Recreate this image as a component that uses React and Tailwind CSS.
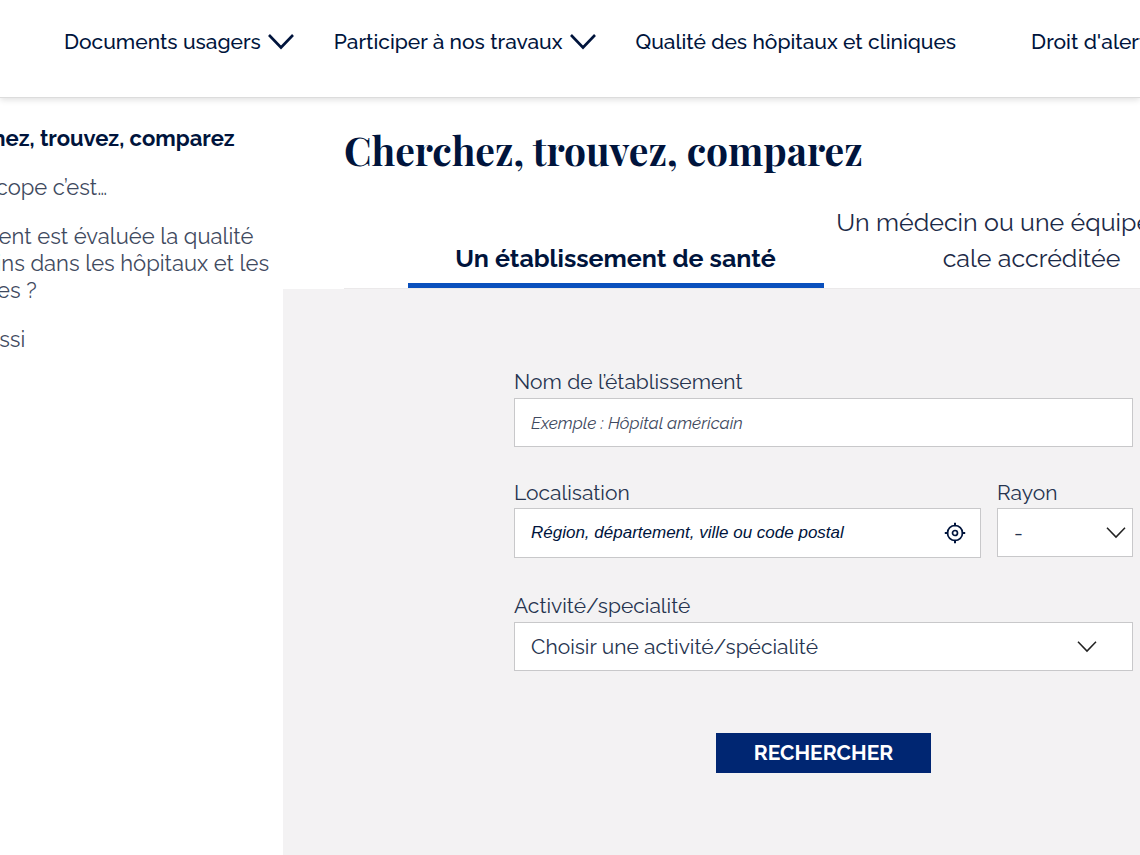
import React, { useState } from 'react';

const NAV_ITEMS = [
  { label: 'Documents usagers', hasMenu: true },
  { label: 'Participer à nos travaux', hasMenu: true },
  { label: 'Qualité des hôpitaux et cliniques', hasMenu: false },
  { label: "Droit d'alerte", hasMenu: false },
];

const SIDE_LINKS = [
  'QualiScope c’est…',
  'Comment est évaluée la qualité des soins dans les hôpitaux et les cliniques ?',
  'Voir aussi',
];

const Chevron = ({ className, strokeWidth = 2 }) => (
  <svg viewBox="0 0 26 16" fill="none" stroke="currentColor" strokeWidth={strokeWidth} className={className} aria-hidden="true">
    <path d="M1 1 L13 13.5 L25 1" />
  </svg>
);

const TargetIcon = () => (
  <svg viewBox="0 0 22 22" fill="none" stroke="currentColor" strokeWidth="2" className="w-[22px] h-[22px]" aria-hidden="true">
    <circle cx="11" cy="11" r="7.5" strokeWidth="1.7" />
    <circle cx="11" cy="11" r="2.5" strokeWidth="1.7" />
    <path d="M11 0.8v3.4M11 17.8v3.4M0.8 11h3.4M17.8 11h3.4" />
  </svg>
);

const Header = () => (
  <header className="relative border-b border-[#dcdcdc] shadow-[0_2px_6px_rgba(0,0,0,0.12)]">
    <nav className="flex gap-10 pl-16 h-[97px] pb-3.5 items-center">
      {NAV_ITEMS.map((item) => (
        <a
          key={item.label}
          href="#"
          className="flex shrink-0 items-center gap-[7px] whitespace-nowrap text-[21px] leading-7 font-medium"
        >
          {item.label}
          {/* Entries without a submenu keep the chevron's space */}
          {item.hasMenu ? <Chevron className="w-[26px] h-4" strokeWidth={2.6} /> : <span className="w-7" />}
        </a>
      ))}
    </nav>
  </header>
);

const Sidebar = () => (
  <aside className="w-[353px] -ml-[70px] pr-2 pt-[27px] shrink-0 text-[22px] leading-[27px]">
    <ul className="flex flex-col gap-[22px]">
      <li>
        <a href="#" className="block font-bold">Cherchez, trouvez, comparez</a>
      </li>
      {SIDE_LINKS.map((label) => (
        <li key={label}>
          <a href="#" className="block text-[#3f4a60]">{label}</a>
        </li>
      ))}
    </ul>
  </aside>
);

const Tabs = ({ active, onChange }) => (
  <div className="flex justify-center mx-[61px] border-b border-[#ebe9ea] text-[25px] leading-9" role="tablist">
    <button
      type="button"
      role="tab"
      aria-selected={active === 0}
      onClick={() => onChange(0)}
      className="w-[416px] pb-[7px] flex items-end justify-center border-b-[5px] border-[#0a50bd] font-bold"
    >
      Un établissement de santé
    </button>
    <button
      type="button"
      role="tab"
      aria-selected={active === 1}
      onClick={() => onChange(1)}
      className="w-[416px] pb-[7px] border-b-[5px] border-transparent text-[#1c2a47] whitespace-nowrap"
    >
      Un médecin ou une équipe médi-
      <br />
      cale accréditée
    </button>
  </div>
);

const SearchForm = () => (
  <form
    className="w-[619px] mx-auto pt-[79px] text-[21px] leading-7 text-[#26344f]"
    onSubmit={(e) => e.preventDefault()}
  >
    <label htmlFor="name" className="block">Nom de l’établissement</label>
    <input
      id="name"
      type="text"
      placeholder="Exemple : Hôpital américain"
      className="block w-full h-[49px] mt-[2px] px-4 border border-[#c8c8ca] bg-white text-[17px] italic placeholder:text-[#3f4a60]"
    />

    <div className="flex gap-4 mt-8">
      <div className="flex-1">
        <label htmlFor="place" className="block">Localisation</label>
        <div className="flex items-center h-[50px] mt-[1px] pl-4 pr-[14px] border border-[#c8c8ca] bg-white">
          <input
            id="place"
            type="text"
            placeholder="Région, département, ville ou code postal"
            className="flex-1 font-['Liberation_Sans',Arial,sans-serif] text-[17px] italic placeholder:text-[#00143c]"
          />
          <button type="button" aria-label="Me localiser" className="text-[#00143c]">
            <TargetIcon />
          </button>
        </div>
      </div>
      <div className="w-[136px]">
        <label htmlFor="radius" className="block">Rayon</label>
        <div className="relative mt-[1px]">
          <select id="radius" className="appearance-none w-full h-[49px] px-4 border border-[#c8c8ca] bg-white">
            <option>-</option>
          </select>
          <Chevron className="absolute right-[7px] top-[19px] w-5 h-3 pointer-events-none text-[#222]" />
        </div>
      </div>
    </div>

    <label htmlFor="activity" className="block mt-[34px]">Activité/specialité</label>
    <div className="relative mt-[2px]">
      <select id="activity" className="appearance-none w-full h-[49px] px-4 border border-[#c8c8ca] bg-white">
        <option>Choisir une activité/spécialité</option>
      </select>
      <Chevron className="absolute right-9 top-[19px] w-5 h-3 pointer-events-none text-[#222]" />
    </div>

    <button
      type="submit"
      className="block w-[215px] h-10 mt-[62px] mx-auto bg-[#002672] text-white font-bold"
    >
      RECHERCHER
    </button>
  </form>
);

const App = () => {
  const [tab, setTab] = useState(0);

  return (
    <div className="min-h-screen flex flex-col overflow-hidden bg-white text-[#00143c] font-['Raleway','Lato',sans-serif]">
      <Header />
      <div className="flex flex-1">
        <Sidebar />
        {/* The results column runs wider than the window */}
        <main className="flex-1 flex flex-col -mr-[224px]">
          <h1 className="pl-[61px] pt-[27px] pb-7 text-[39px] leading-[51px] font-bold font-['Playfair_Display','Liberation_Serif',serif]">
            Cherchez, trouvez, comparez
          </h1>
          <Tabs active={tab} onChange={setTab} />
          <div className="flex-1 pb-20 bg-[#f3f2f3]">
            <SearchForm />
          </div>
        </main>
      </div>
    </div>
  );
};

export default App;
